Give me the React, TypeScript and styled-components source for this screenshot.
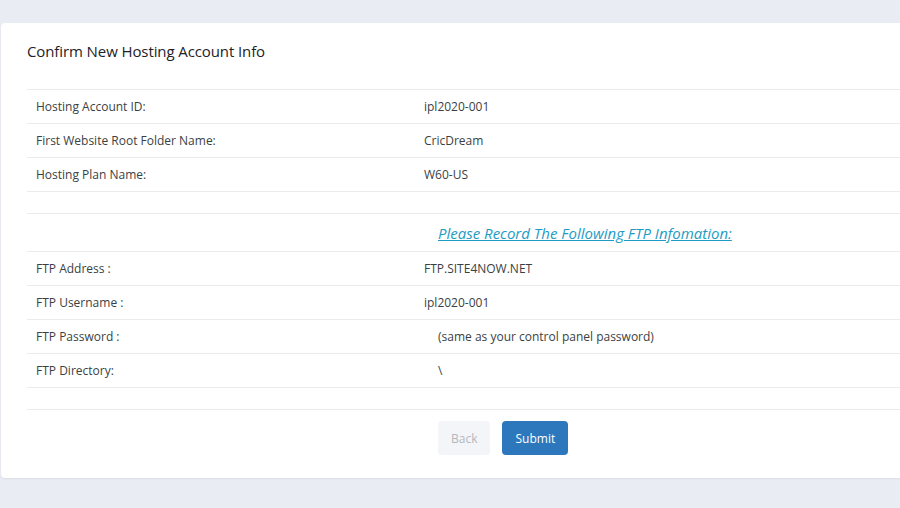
import React from "react";
import styled, { createGlobalStyle } from "styled-components";

const Global = createGlobalStyle`
  html, body { margin: 0; padding: 0; background: #e9ecf3; overflow: hidden; }
  body { font-family: "Open Sans", "Noto Sans", sans-serif; color: #3a3f44; }
`;

const Page = styled.div`
  width: 100%;
  height: 508px;
  padding: 23px 0 0 1px;
  box-sizing: border-box;
`;

const Card = styled.div`
  background: #ffffff;
  border-radius: 4px 0 0 4px;
  box-shadow: 0 1px 2px rgba(60, 70, 90, 0.08);
  padding: 0 0 23px 26px;
  height: 455px;
  box-sizing: border-box;
`;

const Title = styled.h3`
  margin: 0;
  padding: 18px 0 0 0;
  height: 66px;
  box-sizing: border-box;
  font-size: 15px;
  font-weight: 400;
  color: #1e2226;
  letter-spacing: -0.1px;
`;

const Table = styled.div`
  border-top: 1px solid #e9ebee;
`;

const Row = styled.div<{ $h?: number }>`
  display: grid;
  grid-template-columns: 388px 1fr;
  height: ${(p) => p.$h ?? 34}px;
  border-bottom: 1px solid #e9ebee;
  box-sizing: border-box;
  align-items: center;
  font-size: 12px;
`;

const Label = styled.div`
  padding-left: 9px;
  color: #3a3f44;
`;

const Value = styled.div<{ $indent?: boolean }>`
  padding-left: ${(p) => (p.$indent ? 23 : 9)}px;
  color: #3a3f44;
`;

const Notice = styled.a`
  padding-left: 23px;
  font-size: 15px;
  font-style: italic;
  color: #1d9bc4;
  text-decoration: underline;
  cursor: pointer;
`;

const Actions = styled.div`
  display: flex;
  gap: 12px;
  padding: 11px 0 0 411px;
`;

const Button = styled.button<{ $primary?: boolean }>`
  height: 34px;
  padding: 0 13px;
  border-radius: 4px;
  border: none;
  font-family: "Open Sans", "Noto Sans", sans-serif;
  font-size: 12px;
  background: ${(p) => (p.$primary ? "#2d77bd" : "#f3f5f8")};
  color: ${(p) => (p.$primary ? "#ffffff" : "#b4b8be")};
  cursor: pointer;
`;

export default function App() {
  return (
    <>
      <Global />
      <Page>
        <Card>
          <Title>Confirm New Hosting Account Info</Title>
          <Table>
            <Row>
              <Label>Hosting Account ID:</Label>
              <Value>ipl2020-001</Value>
            </Row>
            <Row>
              <Label>First Website Root Folder Name:</Label>
              <Value>CricDream</Value>
            </Row>
            <Row>
              <Label>Hosting Plan Name:</Label>
              <Value>W60-US</Value>
            </Row>
            <Row $h={22} />
            <Row $h={38}>
              <Label />
              <Notice>Please Record The Following FTP Infomation:</Notice>
            </Row>
            <Row>
              <Label>FTP Address :</Label>
              <Value>FTP.SITE4NOW.NET</Value>
            </Row>
            <Row>
              <Label>FTP Username :</Label>
              <Value>ipl2020-001</Value>
            </Row>
            <Row>
              <Label>FTP Password :</Label>
              <Value $indent>(same as your control panel password)</Value>
            </Row>
            <Row>
              <Label>FTP Directory:</Label>
              <Value $indent>\</Value>
            </Row>
            <Row $h={22} />
          </Table>
          <Actions>
            <Button>Back</Button>
            <Button $primary>Submit</Button>
          </Actions>
        </Card>
      </Page>
    </>
  );
}
